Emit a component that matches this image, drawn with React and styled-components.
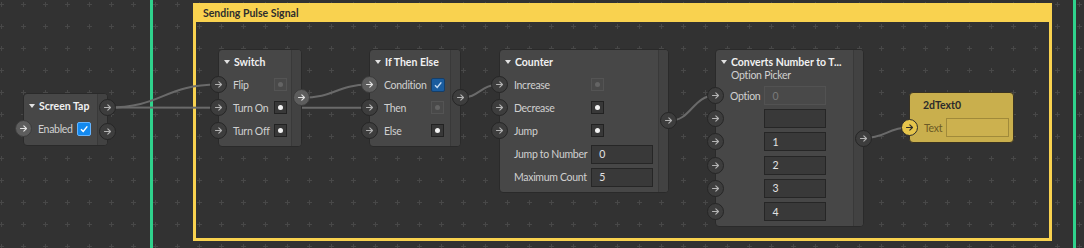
import React from "react";
import styled, { createGlobalStyle } from "styled-components";

const GlobalStyle = createGlobalStyle`
  html, body {
    margin: 0;
    background: #323232;
  }
  body {
    font-family: Lato, "Noto Sans", sans-serif;
    font-size: 10.5px;
  }
`;

const YELLOW = "#f9d24f";

const Canvas = styled.div`
  position: relative;
  width: 1084px;
  height: 248px;
  overflow: hidden;
  background: #323232;
`;

const Layer = styled.svg`
  position: absolute;
  left: 0;
  top: 0;
  width: 1084px;
  height: 248px;
  pointer-events: none;
`;

const Guide = styled.div`
  position: absolute;
  top: 0;
  bottom: 0;
  left: ${(p) => p.$x}px;
  width: 3px;
  background: #2fd28c;
`;

const Group = styled.section`
  position: absolute;
  left: 193px;
  top: 3px;
  width: 859px;
  height: 238px;
  box-sizing: border-box;
  border: 3px solid ${YELLOW};
  border-top-width: 0;
`;

const GroupHeader = styled.header`
  height: 19px;
  background: ${YELLOW};
  display: flex;
  align-items: center;
  padding-left: 7px;
  font-weight: 700;
  color: #2d2d2d;
`;

const NodeBox = styled.div`
  position: absolute;
  left: ${(p) => p.$x}px;
  top: ${(p) => p.$y}px;
  width: ${(p) => p.$w}px;
  min-height: ${(p) => p.$h || 0}px;
  box-sizing: border-box;
  display: flex;
  background: ${(p) => (p.$gold ? "#c9af4d" : "#474747")};
  border: 1px solid ${(p) => (p.$gold ? "#3a3322" : "#2a2a2a")};
  border-radius: 4px;
`;

const NodeBody = styled.div`
  flex: 1;
  min-width: 0;
  padding-bottom: 3px;
  display: flex;
  flex-direction: column;
`;

const Strip = styled.div`
  width: 9px;
  border-left: 1px solid #393939;
  background: #424242;
  border-radius: 0 3px 3px 0;
`;

const Title = styled.div`
  height: 23px;
  display: flex;
  align-items: center;
  gap: 4px;
  padding-left: ${(p) => (p.$plain ? 13 : 5)}px;
  font-weight: 700;
  color: ${(p) => (p.$gold ? "#2b2b2b" : "#f1f1f1")};
  white-space: nowrap;
`;

const Caret = styled.span`
  width: 0;
  height: 0;
  border-left: 3.5px solid transparent;
  border-right: 3.5px solid transparent;
  border-top: 4px solid #e2e2e2;
`;

const Subtitle = styled.div`
  height: 11px;
  line-height: 11px;
  margin: -3px 0 3px;
  padding-left: 15px;
  letter-spacing: -0.25px;
  color: #d0d0d0;
  white-space: nowrap;
`;

const Rows = styled.div`
  display: grid;
  grid-template-columns: 8px auto auto;
  grid-auto-rows: 23.2px;
  align-items: center;
  justify-content: start;
`;

const Port = styled.span`
  width: 17px;
  height: 17px;
  box-sizing: border-box;
  margin-left: ${(p) => (p.$in ? "-9px" : 0)};
  border-radius: 50%;
  display: grid;
  place-items: center;
  border: 1px solid ${(p) => (p.$gold ? "#2b2b2b" : p.$lit ? "#3b3b3b" : "#262626")};
  background: ${(p) => (p.$gold ? "#e6c54b" : p.$lit ? "#5d5d5d" : "#3d3d3d")};
  color: ${(p) => (p.$gold ? "#2b2b2b" : p.$lit ? "#e4e4e4" : "#b4b4b4")};
`;

const Label = styled.span`
  padding: 0 4px 0 6px;
  letter-spacing: -0.3px;
  color: ${(p) => (p.$gold ? "#6b5a26" : "#d0d0d0")};
  white-space: nowrap;
`;

const Pulse = styled.span`
  width: 13px;
  height: 13px;
  box-sizing: border-box;
  border: 1px solid ${(p) => (p.$off ? "#545454" : "#222")};
  background: ${(p) => (p.$off ? "#494949" : "#383838")};
  display: grid;
  place-items: center;
  &::after {
    content: "";
    width: 5px;
    height: 5px;
    border-radius: 50%;
    background: ${(p) => (p.$off ? "#646464" : "#f2f2f2")};
  }
`;

const Check = styled.span`
  width: 14px;
  height: 14px;
  box-sizing: border-box;
  border-radius: 2px;
  display: grid;
  place-items: center;
  border: 1px solid ${(p) => (p.$dim ? "#153e68" : "#65b4ff")};
  background: ${(p) => (p.$dim ? "#1a5c9e" : "#1389ef")};
  color: ${(p) => (p.$dim ? "#c5dcf3" : "#fff")};
`;

const Field = styled.span`
  width: ${(p) => (p.$gold ? 63 : 62)}px;
  height: 19px;
  box-sizing: border-box;
  padding-left: 7px;
  display: flex;
  align-items: center;
  border: 1px solid ${(p) => (p.$gold ? "#a08a3a" : p.$dim ? "#525252" : "#262626")};
  background: ${(p) => (p.$gold ? "#ccb14f" : p.$dim ? "#494949" : "#393939")};
  color: ${(p) => (p.$dim ? "#7a7a7a" : "#e2e2e2")};
`;

const Outputs = styled.div`
  position: absolute;
  right: -9px;
  top: 0;
  bottom: 0;
  display: flex;
  flex-direction: column;
  justify-content: center;
  gap: 7px;
`;

const Arrow = () => (
  <svg width="9" height="9" viewBox="0 0 9 9">
    <path
      d="M1.5 4.5h6M4.8 1.8l2.7 2.7-2.7 2.7"
      fill="none"
      stroke="currentColor"
      strokeWidth="1.1"
      strokeLinecap="round"
      strokeLinejoin="round"
    />
  </svg>
);

const Tick = () => (
  <svg width="10" height="10" viewBox="0 0 10 10">
    <path d="M2 5.3l2.2 2.2L8.3 2.4" fill="none" stroke="currentColor" strokeWidth="1.5" />
  </svg>
);

const Value = ({ v, gold }) => {
  if (!v) return <span />;
  if (v.type === "pulse") return <Pulse $off={v.off} />;
  if (v.type === "check")
    return (
      <Check $dim={v.dim}>
        <Tick />
      </Check>
    );
  return (
    <Field $dim={v.dim} $gold={gold}>
      {v.text}
    </Field>
  );
};

const Node = ({ x, y, w, h, title, subtitle, rows, outputs = [], gold }) => (
  <NodeBox $x={x} $y={y} $w={w} $h={h} $gold={gold}>
    <NodeBody>
      <Title $plain={gold} $gold={gold}>
        {!gold && <Caret />}
        {title}
      </Title>
      {subtitle && <Subtitle>{subtitle}</Subtitle>}
      <Rows>
        {rows.map((r, i) => (
          <React.Fragment key={i}>
            {r.port ? (
              <Port $in $lit={r.port === "lit"} $gold={gold}>
                <Arrow />
              </Port>
            ) : (
              <span />
            )}
            <Label $gold={gold}>{r.label}</Label>
            <Value v={r.value} gold={gold} />
          </React.Fragment>
        ))}
      </Rows>
    </NodeBody>
    {outputs.length > 0 && <Strip />}
    {outputs.length > 0 && (
      <Outputs>
        {outputs.map((o, i) => (
          <Port key={i} $lit={o === "lit"}>
            <Arrow />
          </Port>
        ))}
      </Outputs>
    )}
  </NodeBox>
);

const pulse = (off) => ({ type: "pulse", off });
const field = (text, dim) => ({ type: "field", text, dim });

const nodes = [
  {
    x: 23, y: 93, w: 85, h: 53, title: "Screen Tap",
    rows: [{ port: "lit", label: "Enabled", value: { type: "check" } }],
    outputs: ["", ""],
  },
  {
    x: 218, y: 49, w: 84, title: "Switch",
    rows: [
      { port: true, label: "Flip", value: pulse(true) },
      { port: true, label: "Turn On", value: pulse() },
      { port: true, label: "Turn Off", value: pulse() },
    ],
    outputs: ["lit"],
  },
  {
    x: 369, y: 49, w: 92, title: "If Then Else",
    rows: [
      { port: "lit", label: "Condition", value: { type: "check", dim: true } },
      { port: true, label: "Then", value: pulse(true) },
      { port: true, label: "Else", value: pulse() },
    ],
    outputs: [""],
  },
  {
    x: 499, y: 49, w: 170, title: "Counter",
    rows: [
      { port: true, label: "Increase", value: pulse(true) },
      { port: true, label: "Decrease", value: pulse() },
      { port: true, label: "Jump", value: pulse() },
      { label: "Jump to Number", value: field("0") },
      { label: "Maximum Count", value: field("5") },
    ],
    outputs: [""],
  },
  {
    x: 715, y: 49, w: 149, title: "Converts Number to T...", subtitle: "Option Picker",
    rows: [
      { port: true, label: "Option", value: field("0", true) },
      { port: true, label: "", value: field("") },
      { port: true, label: "", value: field("1") },
      { port: true, label: "", value: field("2") },
      { port: true, label: "", value: field("3") },
      { port: true, label: "", value: field("4") },
    ],
    outputs: [""],
  },
  {
    x: 909, y: 92, w: 105, title: "2dText0", gold: true,
    rows: [{ port: true, label: "Text", value: field("") }],
  },
];

const bez = (x1, y1, x2, y2) => {
  const dx = (x2 - x1) * 0.5;
  return `M${x1} ${y1} C${x1 + dx} ${y1}, ${x2 - dx} ${y2}, ${x2} ${y2}`;
};

const wires = [
  bez(107.5, 107.5, 218.5, 84.6),
  bez(107.5, 107.5, 369.5, 107.8),
  bez(301.5, 97.8, 369.5, 84.6),
  bez(460.5, 97.8, 499.5, 84.6),
  bez(668.5, 121, 715.5, 95.6),
  bez(863.5, 138.1, 909.5, 127.6),
];

export default function App() {
  return (
    <>
      <GlobalStyle />
      <Canvas>
        <Layer>
          <defs>
            <pattern id="plus" x="-10" y="-7" width="22" height="22" patternUnits="userSpaceOnUse">
              <rect x="9" y="11" width="5" height="1" fill="#484848" />
              <rect x="11" y="9" width="1" height="5" fill="#484848" />
            </pattern>
          </defs>
          <rect width="1084" height="248" fill="url(#plus)" />
        </Layer>
        <Guide $x={150} />
        <Guide $x={1073} />
        <Group>
          <GroupHeader>Sending Pulse Signal</GroupHeader>
        </Group>
        <Layer>
          {wires.map((d, i) => (
            <path key={i} d={d} fill="none" stroke="#6a6a6a" strokeWidth="2" />
          ))}
        </Layer>
        {nodes.map((n, i) => (
          <Node key={i} {...n} />
        ))}
      </Canvas>
    </>
  );
}
